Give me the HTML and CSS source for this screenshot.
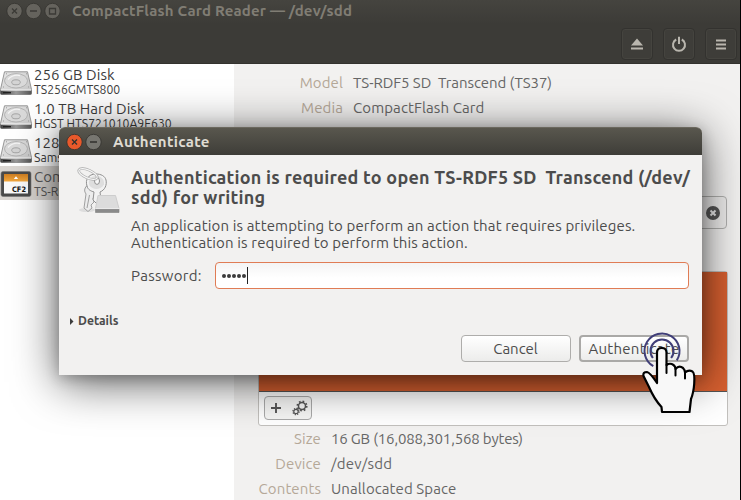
FILE: index.html
```html
<!DOCTYPE html>
<html lang="en">
<head>
<meta charset="utf-8">
<title>Disks</title>
<link rel="stylesheet" href="styles.css">
</head>
<body>
<svg class="defs" width="0" height="0">
  <defs>
    <linearGradient id="metal" x1="0" y1="0" x2="1" y2="1"><stop offset="0" stop-color="#e8e8e8"/><stop offset="1" stop-color="#c2c2c2"/></linearGradient>
    <linearGradient id="edge" x1="0" y1="0" x2="1" y2="0"><stop offset="0" stop-color="#444"/><stop offset=".5" stop-color="#999"/><stop offset="1" stop-color="#555"/></linearGradient>
    <linearGradient id="card" x1="0" y1="0" x2="0" y2="1"><stop offset="0" stop-color="#cf7f22"/><stop offset="1" stop-color="#f3a83e"/></linearGradient>
    <symbol id="disk" viewBox="0 0 32 24">
      <path d="M4.500 .8H27.500L31.500 18.500V22.500Q31.500 23.500 30.500 23.500H1.500Q.5 23.500 .5 22.500V18.500Z" fill="url(#metal)" stroke="#8c8c8c" stroke-width=".9"/>
      <path d="M.5 19.500H31.500V22.500Q31.500 23.500 30.500 23.500H1.500Q.5 23.500 .5 22.500Z" fill="url(#edge)"/>
      <path d="M1 19H31" stroke="#fff" stroke-width=".8"/>
      <path d="M3 21.700H11" stroke="#222" stroke-width="1.400"/>
      <ellipse cx="16" cy="9.800" rx="11.500" ry="7.200" fill="#d9d9d9" stroke="#a8a8a8" stroke-width=".8"/>
      <ellipse cx="16" cy="11.300" rx="4.300" ry="2.500" fill="#d4d4d4" stroke="#989898" stroke-width=".8"/>
      <path d="M8 8.500Q13 3 20 4.500" fill="none" stroke="#f4f4f4" stroke-width="1.300"/>
      <path d="M6 2.800h1M26 2.800h1M3 16h1M28 16h1" stroke="#999"/>
    </symbol>
  </defs>
</svg>
<div class="window">
  <header class="header">
    <div class="titlebar">
      <svg class="controls" width="54" height="18" viewBox="0 0 54 18" fill="none" stroke="#3b3a36" stroke-width="1.300">
        <g fill="#65635d" stroke="#33322e" stroke-width=".8"><circle cx="8.500" cy="9" r="7.700"/><circle cx="27.500" cy="9" r="7.700"/><circle cx="46.500" cy="9" r="7.700"/></g>
        <path d="M6 6.500l5 5m0-5l-5 5M24 9h7M43.500 6.500h6v5.500h-6z"/>
      </svg>
      <span class="title">CompactFlash Card Reader — /dev/sdd</span>
    </div>
    <div class="tools">
      <button class="tool" aria-label="Eject"><svg width="16" height="16"><path d="M2 9.500L8 2.500L14 9.500ZM2 11.500h12v2H2z"/></svg></button>
      <button class="tool" aria-label="Power"><svg width="16" height="16"><path d="M5.200 3.500A6 6 0 1 0 10.800 3.500" class="ring"/><path d="M7 .8h2v7.200H7z"/></svg></button>
      <button class="tool" aria-label="Menu"><svg width="16" height="16"><path d="M3 3.500h10v2H3zM3 7.500h10v2H3zM3 11.500h10v2H3z"/></svg></button>
    </div>
  </header>
  <div class="body">
    <ul class="devices">
      <li class="device"><svg width="32" height="24"><use href="#disk"/></svg><div><b>256 GB Disk</b><small>TS256GMTS800</small></div></li>
      <li class="device"><svg width="32" height="24"><use href="#disk"/></svg><div><b>1.0 TB Hard Disk</b><small>HGST HTS721010A9E630</small></div></li>
      <li class="device"><svg width="32" height="24"><use href="#disk"/></svg><div><b>128 GB Disk</b><small>Samsung SSD</small></div></li>
      <li class="device selected">
        <svg width="32" height="26"><rect x="1" y=".5" width="30" height="25" rx="2" fill="#4a4a4a" stroke="#777" stroke-width=".6"/><rect x="4" y="3" width="24" height="19.500" fill="#fafafa"/><rect x="4" y="3" width="24" height="7.500" fill="url(#card)"/><path d="M13.800 8L16 5.200L18.200 8Z" fill="#fff"/><text x="12" y="20.500" class="cf" textLength="14" lengthAdjust="spacingAndGlyphs">CF2</text></svg>
        <div><b>CompactFlash</b><small>TS-RDF5 SD</small></div></li>
    </ul>
    <main class="main">
      <dl class="props">
        <dt>Model</dt><dd class="model">TS-RDF5 SD&nbsp; Transcend (TS37)</dd>
        <dt>Media</dt><dd>CompactFlash Card</dd>
      </dl>
      <div class="jobs"><button class="stop" aria-label="Stop"><svg width="14" height="14"><circle cx="7" cy="7" r="7" fill="#565656"/><path d="M4.500 4.500l5 5m0-5l-5 5" stroke="#eee" stroke-width="2"/></svg></button></div>
      <section class="volumes">
        <div class="volume"></div>
        <div class="volume-bar">
          <div class="pair">
            <svg width="46" height="22" fill="none" stroke="#555">
              <path d="M6 11h10M11 6v10" stroke-width="1.900"/>
              <circle cx="37" cy="9" r="3.500" stroke-width="1.500"/><circle cx="37" cy="9" r="4.700" stroke-width="1.700" stroke-dasharray="1.700 1.990"/>
              <circle cx="31" cy="14.500" r="2.200" stroke-width="1.200"/><circle cx="31" cy="14.500" r="3.100" stroke-width="1.200" stroke-dasharray="1.200 1.230"/>
            </svg>
          </div>
        </div>
      </section>
      <dl class="props lower">
        <dt>Size</dt><dd class="size">16 GB (16,088,301,568 bytes)</dd>
        <dt>Device</dt><dd class="path">/dev/sdd</dd>
        <dt>Contents</dt><dd>Unallocated Space</dd>
      </dl>
    </main>
  </div>
</div>

<div class="dialog" role="dialog">
  <div class="dialog-title">
    <svg width="36" height="18" fill="none" stroke="#32312d" stroke-width="1.300">
      <circle cx="8.500" cy="9" r="7.700" fill="#e9592b" stroke-width=".8"/><circle cx="27.500" cy="9" r="7.700" fill="#777670" stroke-width=".8"/>
      <path d="M6 6.500l5 5m0-5l-5 5M24 9h7"/>
    </svg>
    <span>Authenticate</span>
  </div>
  <div class="dialog-body">
    <svg class="keys" width="48" height="48" viewBox="0 0 48 48" fill="none">
      <ellipse cx="10" cy="43" rx="8" ry="2" fill="#ddd"/>
      <path d="M9.500 19Q6 23 9 27L7 41L11 44.500L15 41L14 38L17 35L16 31L20 27Z" fill="#ececec" stroke="#a0a0a0"/>
      <path d="M12.500 28L10 41" stroke="#a0a0a0"/>
      <path d="M19 7C11 7 8 13 10 19C11 23 14 24 17 25L16 33L20 37L24 33L23 25C28 23 30 18 29 13C28 9 24 7 19 7Z" fill="#f2f2f2" stroke="#909090"/>
      <path d="M19 9C13 9 10.500 14 12.500 18.500C16 23.500 24 23 27 17.500C27.500 12 24 9 19 9Z" fill="#dedede"/>
      <ellipse cx="20" cy="14" rx="2.500" ry="3.400" fill="#f8f8f8" stroke="#909090"/>
      <ellipse cx="11" cy="7" rx="10" ry="4" transform="rotate(24 11 7)" stroke="#aaa" stroke-width="2.600"/>
      <ellipse cx="11" cy="7" rx="10" ry="4" transform="rotate(24 11 7)" stroke="#f5f5f5" stroke-width="1.200"/>
      <path d="M21 28.500H38.500L42 41.500H18.500Z" fill="#dcdcdc" stroke="#cdcdcd"/>
      <path d="M18.500 42H42V45.500H18.500Z" fill="#8a8a8a" stroke="#808080" stroke-width=".6"/>
      <path d="M18.500 41.600H42" stroke="#fff" stroke-width=".8"/>
    </svg>
    <div class="content">
      <h1>Authentication is required to open TS-RDF5 SD&nbsp; Transcend (/dev/<br>sdd) for writing</h1>
      <p>An application is attempting to perform an action that requires privileges.<br>Authentication is required to perform this action.</p>
      <div class="field"><label>Password:</label><div class="entry"><i></i><i></i><i></i><i></i><i></i><span class="caret"></span></div></div>
    </div>
  </div>
  <div class="details"><svg width="4" height="7"><path d="M0 0L3.500 3.500L0 7Z" fill="#3c3c3c"/></svg><span>Details</span></div>
  <div class="actions"><button class="btn cancel">Cancel</button><button class="btn default">Authenticate</button></div>
</div>

<svg class="pointer" width="62" height="84" viewBox="0 0 62 84" fill="none">
  <path d="M16.300 35.200A17.500 17.500 0 1 1 39.800 29.400M15.900 27A11.500 11.500 0 1 1 34.100 27" stroke="#403e78" stroke-width="2"/>
  <path d="M20 46V21.500Q20 17 24.700 17Q29.500 17 29.500 21.500V34Q33 31.500 36.500 34Q38.500 35.500 38.500 38Q42 34 46 37Q48 39 48 41.500Q51.500 38.500 55.500 40.500Q58 42.500 57.200 53Q56.500 62 54 68L52.500 81H25L24.500 76C18 69 15 63 12 56L6.500 45Q5.500 41 10 41Q13 41.500 20 52Z" fill="#f8f8f8" stroke="#000" stroke-width="2.200" stroke-linejoin="round"/>
  <path d="M29.500 34V42M38.500 38V44.500M48 41.500V47.500" stroke="#000" stroke-width="2" stroke-linecap="round"/>
</svg>
</body>
</html>
```
FILE: styles.css
```css
* { box-sizing: border-box; }
body { margin: 0; width: 741px; height: 500px; overflow: hidden; position: relative; background: #000; font: 15px/20px Ubuntu, "Noto Sans", sans-serif; color: #4c4c4c; }
button { font: inherit; color: inherit; padding: 0; margin: 0; }
ul, dl, dd, h1, p { margin: 0; padding: 0; }
.defs { position: absolute; }
.window { width: 740px; height: 500px; overflow: hidden; display: flex; flex-direction: column; background: #f2f1f0; }
.header { height: 64px; background: linear-gradient(#45443f, #3c3b37 24px); border-bottom: 1px solid #33322e; display: flex; flex-direction: column; }
.titlebar { height: 22px; display: flex; align-items: center; padding-left: 6px; gap: 12px; }
.controls { flex: none; }
.title { font-weight: 700; color: #807d74; white-space: nowrap; letter-spacing: .19px; }
.tools { display: flex; justify-content: flex-end; gap: 10px; padding: 6px 3px 0 0; }
.tool { width: 32px; height: 32px; border: 1px solid #33322f; border-radius: 4px; background: #3e3d39; box-shadow: inset 0 0 0 1px #45443f; display: grid; place-items: center; }
.tool svg { fill: #b9b6ae; }
.tool .ring { fill: none; stroke: #b9b6ae; stroke-width: 2; }
.body { flex: 1; display: flex; min-height: 0; }
.devices { width: 234px; background: #fff; list-style: none; }
.device { height: 34px; display: flex; align-items: flex-start; gap: 2px; color: #3c3c3c; white-space: nowrap; }
.device svg { flex: none; margin-top: 7px; }
.device b { display: block; font-weight: 400; line-height: 18px; margin-top: 2px; letter-spacing: .05px; }
.device small { display: block; font-size: 12.200px; line-height: 12px; }
.selected { background: #dad6d2; color: #5a5a5a; }
.selected svg { margin-top: 5px; }
.cf { font: 700 7.500px "DejaVu Sans", sans-serif; fill: #111; }
.main { flex: 1; display: flex; flex-direction: column; padding: 6px 12px 0 24px; }
.main > * { flex: none; }
.props { display: grid; grid-template-columns: 85px 1fr; column-gap: 10px; grid-auto-rows: 25px; line-height: 25px; white-space: nowrap; letter-spacing: .1px; }
.props dt { text-align: right; color: #b5a898; }
.props dd { color: #666; }
.props .model { letter-spacing: -.06px; }
.props .size { letter-spacing: -.17px; }
.props .path { letter-spacing: .3px; }
.jobs { margin-top: 76px; height: 33px; display: flex; justify-content: flex-end; padding-right: 1px; }
.stop { width: 40px; height: 33px; border: 1px solid #b0b0ae; border-radius: 4px; background: #efeeed; display: grid; place-items: center; padding-left: 11px; }
.volumes { margin-top: 42px; height: 155px; width: 470px; border: 1px solid #c2c0bd; border-radius: 3px; background: #fff; display: flex; flex-direction: column; }
.volume { height: 120px; background: #d86030; border-bottom: 1px solid #555; }
.volume-bar { padding: 4px 5px; }
.pair { width: 48px; height: 24px; border: 1px solid #aaa; border-radius: 4px; background: #f6f6f5; }
.pair svg { display: block; }
.lower { grid-template-columns: 63px 1fr; }

.dialog { position: absolute; left: 59px; top: 127px; width: 643px; height: 248px; background: #f2f1f0; border-radius: 6px 6px 0 0; box-shadow: 0 7px 46px rgba(0,0,0,.66), 0 3px 14px rgba(0,0,0,.22); display: flex; flex-direction: column; }
.dialog-title { height: 28px; border-radius: 6px 6px 0 0; background: linear-gradient(#59574e, #3e3d38); border-top: 1px solid #6b685e; display: flex; align-items: center; padding-left: 7px; gap: 11px; font-weight: 700; color: #dfdbd2; letter-spacing: .33px; }
.dialog-body { display: flex; gap: 6px; padding: 12px 13px 0 18px; }
.keys { flex: none; }
.content { flex: 1; min-width: 0; white-space: nowrap; }
.content h1 { font-size: 18px; line-height: 20px; letter-spacing: .22px; }
.content p { margin-top: 10px; line-height: 17px; letter-spacing: .145px; }
.field { margin-top: 11px; display: flex; align-items: center; }
.field label { width: 84px; letter-spacing: .3px; }
.entry { flex: 1; height: 27px; border: 1px solid #e07c55; border-radius: 4px; background: linear-gradient(#f4f4f4, #fff 60%); display: flex; align-items: center; padding-left: 6px; gap: 1px; }
.entry i { width: 4px; height: 4px; border-radius: 50%; background: #3c3c3c; }
.caret { width: 1px; height: 17px; background: #222; }
.details { margin-top: 22px; padding-left: 11px; display: flex; align-items: center; gap: 4px; font-size: 12.200px; font-weight: 700; }
.actions { display: flex; justify-content: flex-end; gap: 8px; margin-top: 4px; padding-right: 13px; }
.btn { width: 110px; height: 27px; border: 1px solid #aeadab; border-radius: 4px; background: linear-gradient(#fff, #ececeb); }
.cancel { padding-right: 1px; }
.default { border: 2px solid #aaa9a7; letter-spacing: .25px; }
.pointer { position: absolute; left: 637px; top: 331px; }
```
